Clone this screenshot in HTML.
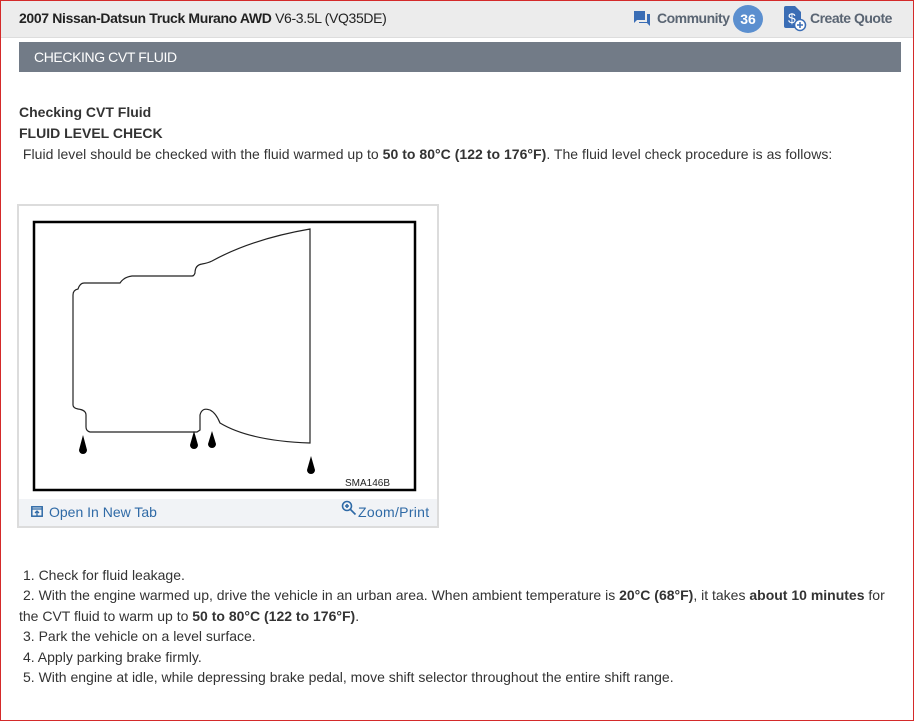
<!DOCTYPE html>
<html><head><meta charset="utf-8"><style>
*{margin:0;padding:0;box-sizing:border-box}
body{width:914px;height:721px;overflow:hidden;background:#fff;font-family:"Liberation Sans",Arial,sans-serif;color:#333;position:relative}
.frame{position:absolute;left:0;top:0;width:914px;height:721px;border:1px solid #d42a2a;pointer-events:none;z-index:9}
.hdr{position:absolute;left:0;top:0;width:914px;height:38px;background:#ececec;border-bottom:1px solid #ddd}
.abs{position:absolute;white-space:nowrap}
.title{position:absolute;left:19px;top:42px;width:882px;height:30px;background:#727b87;color:#fff;font-size:14px;line-height:30px;padding-left:15px;letter-spacing:-0.4px}
.t{font-size:14px;line-height:20px}
b{font-weight:bold;color:#333}
.box{position:absolute;left:17px;top:204px;width:422px;height:324px;border:2px solid #dcdcdc;background:#fff}
.links{position:absolute;left:19px;top:499px;width:418px;height:27px;background:#f1f3f6}
.lk{color:#2f6aa6;font-size:14px}
</style></head><body>
<div class="hdr"></div>
<div class="abs" style="left:19px;top:10px;font-size:14px;color:#222;letter-spacing:-0.35px"><b style="color:#222">2007 Nissan-Datsun Truck Murano AWD</b> V6-3.5L (VQ35DE)</div>
<svg class="abs" style="left:633px;top:10px" width="18" height="17" viewBox="0 0 18 17"><path d="M1 1h11v9H4l-3 3z" fill="#3a6db5"/><path d="M14 4h3v12l-3-3H6v-1h8z" fill="#3a6db5"/></svg>
<div class="abs" style="left:657px;top:10px;font-size:14px;font-weight:bold;color:#5a6573;letter-spacing:-0.5px">Community</div>
<div class="abs" style="left:733px;top:5px;width:30px;height:28px;border-radius:50%;background:#5b8fcf;color:#fff;font-weight:bold;font-size:14px;text-align:center;line-height:28px">36</div>
<svg class="abs" style="left:783px;top:6px" width="24" height="26" viewBox="0 0 24 26"><path d="M1 2a2 2 0 0 1 2-2h9l6 6v16H3a2 2 0 0 1-2-2z" fill="#3a6db5"/><text x="5" y="17" font-size="14" fill="#fff" font-family="Liberation Sans">$</text><circle cx="17" cy="19" r="5.5" fill="#fff" stroke="#3a6db5" stroke-width="1.5"/><path d="M17 16v6M14 19h6" stroke="#3a6db5" stroke-width="1.5"/></svg>
<div class="abs" style="left:810px;top:10px;font-size:14px;font-weight:bold;color:#5a6573;letter-spacing:-0.5px">Create Quote</div>
<div class="title">CHECKING CVT FLUID</div>
<div class="abs t" style="left:19px;top:102px"><b>Checking CVT Fluid</b></div>
<div class="abs t" style="left:19px;top:123px"><b>FLUID LEVEL CHECK</b></div>
<div class="abs t" style="left:19px;top:144px;letter-spacing:0.03px">&nbsp;Fluid level should be checked with the fluid warmed up to <b>50 to 80°C (122 to 176°F)</b>. The fluid level check procedure is as follows:</div>
<div class="box"></div>
<svg class="abs" style="left:0;top:0" width="440" height="500">
<rect x="34" y="222" width="381" height="268" fill="none" stroke="#000" stroke-width="2.5"/>
<path d="M73 405V295q0-5 5-6q2-6 6-6h36q4-6 12-7h60q2 0 3-3q0-8 7-9q6-1 10-3q40-22 98-32V443q-60-2-90-20q-4-10-10-13q-8-3-10 5v15l-3 2H90q-4-1-4-5v-12q0-5-8-6q-5-1-5-4z" fill="none" stroke="#222" stroke-width="1.2"/>
<g fill="#000">
<path d="M83 435l-4 15a4 4 0 0 0 8 0z"/><path d="M194 431l-4 14a4 4 0 0 0 8 0z"/><path d="M212 431l-4 13a4 4 0 0 0 8 0z"/><path d="M311 456l-4 14a4 4 0 0 0 8 0z"/>
</g>
<text x="345" y="486" font-size="10" font-family="Liberation Sans" fill="#222">SMA146B</text>
</svg>
<div class="links"></div>
<svg class="abs" style="left:31px;top:506px" width="12" height="11" viewBox="0 0 12 11"><rect x="0.8" y="0.8" width="10.4" height="9.4" fill="none" stroke="#2f6aa6" stroke-width="1.5"/><path d="M1 3h10M6 10V5M4 7l2-2 2 2" stroke="#2f6aa6" stroke-width="1.3" fill="none"/></svg>
<div class="abs lk" style="left:49px;top:504px">Open In New Tab</div>
<svg class="abs" style="left:341px;top:500px" width="16" height="16" viewBox="0 0 16 16"><circle cx="6" cy="6" r="4.5" fill="none" stroke="#2f6aa6" stroke-width="1.6"/><path d="M9.5 9.5l5 5M4 6h4M6 4v4" stroke="#2f6aa6" stroke-width="1.6"/></svg>
<div class="abs lk" style="left:358px;top:504px;letter-spacing:0.3px">Zoom/Print</div>
<div class="abs t" style="left:23px;top:565px">1. Check for fluid leakage.</div>
<div class="abs t" style="left:23px;top:585px;letter-spacing:0.0px">2. With the engine warmed up, drive the vehicle in an urban area. When ambient temperature is <b>20°C (68°F)</b>, it takes <b>about 10 minutes</b> for</div>
<div class="abs t" style="left:19px;top:606px">the CVT fluid to warm up to <b>50 to 80°C (122 to 176°F)</b>.</div>
<div class="abs t" style="left:23px;top:626px">3. Park the vehicle on a level surface.</div>
<div class="abs t" style="left:23px;top:647px">4. Apply parking brake firmly.</div>
<div class="abs t" style="left:23px;top:667px">5. With engine at idle, while depressing brake pedal, move shift selector throughout the entire shift range.</div>
<div class="frame"></div>
</body></html>
